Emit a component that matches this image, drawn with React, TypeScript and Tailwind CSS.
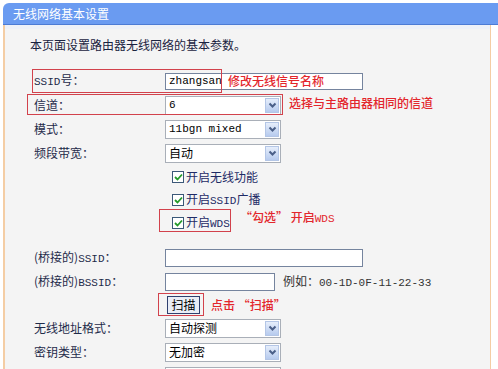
import React from "react";

const mono = "font-['Liberation_Mono','Noto_Sans_CJK_SC',monospace]";
const cn = "font-['Noto_Sans_CJK_SC',sans-serif]";

const Lat = ({ children }: { children: React.ReactNode }) => (
  <span className={`${mono} text-[11px]`}>{children}</span>
);

const Arrow = () => (
  <span className="ml-auto mr-[1px] flex h-[15px] w-[14px] items-center justify-center border border-[#b4c6e6] bg-gradient-to-b from-[#e6eefb] to-[#b7cbee]">
    <svg width="9" height="7" viewBox="0 0 9 7">
      <path d="M1.5 1.5 L4.5 4.5 L7.5 1.5" fill="none" stroke="#4a5f88" strokeWidth="2" />
    </svg>
  </span>
);

const Select = ({ value, latin }: { value: string; latin?: boolean }) => (
  <div className="flex h-[19px] w-[116px] items-center border border-[#a9afb8] bg-white pl-[3px]">
    <span className={latin ? `${mono} text-[11px] text-black` : `${cn} text-[12px] text-black`}>{value}</span>
    <Arrow />
  </div>
);

const Check = () => (
  <span className="flex h-[12px] w-[12px] items-center justify-center border border-[#3b5878] bg-white">
    <svg width="9" height="8" viewBox="0 0 9 8">
      <path d="M1 4 L3.5 6.5 L8 1.5" fill="none" stroke="#249a2a" strokeWidth="1.8" />
    </svg>
  </span>
);

const Row = ({
  label,
  children,
  className = "",
}: {
  label?: React.ReactNode;
  children?: React.ReactNode;
  className?: string;
}) => (
  <div className={`relative flex h-6 items-center pl-[29px] ${className}`}>
    <div className={`w-[131px] ${cn} text-[12px] text-[#1f2b4a]`}>{label}</div>
    {children}
  </div>
);

const CheckRow = ({ children, className = "" }: { children: React.ReactNode; className?: string }) => (
  <div className={`relative flex h-[23px] items-center gap-[2px] pl-[167px] ${cn} text-[12px] text-[#1f2b66] ${className}`}>
    <Check />
    <span>{children}</span>
  </div>
);

const Note = ({ children, className }: { children: React.ReactNode; className: string }) => (
  <span className={`absolute ${cn} text-[12px] font-medium text-[#e3262c] ${className}`}>{children}</span>
);

export default function App() {
  return (
    <div className="h-[369px] w-[498px] overflow-hidden bg-white pt-[3px]">
      <div className={`ml-[3px] flex h-[22px] items-center rounded-tl-[6px] border-b border-[#4c7bd4] bg-[#6a9bf1] pl-[10px] ${cn} text-[12px] text-white`}>
        无线网络基本设置
      </div>
      <div className="ml-[3px] h-[400px] w-[488px] border-r border-l-2 border-[#f4cda4] bg-[#f4f4f4]">
        <div className="h-[4px] bg-[#eef1f8]" />
        <div className={`mt-[4px] flex h-6 items-center pl-[25px] ${cn} text-[12px] text-[#1a2340]`}>
          本页面设置路由器无线网络的基本参数。
        </div>

        <Row
          className="mt-[12px]"
          label={
            <>
              <Lat>SSID</Lat>号：
            </>
          }
        >
          <div className="flex h-[17px] w-[198px] items-center border border-[#75849e] bg-white pl-[3px]">
            <span className={`${mono} text-[11px] text-black`}>zhangsan</span>
          </div>
          <span className="pointer-events-none absolute left-[27px] top-0 h-[24px] w-[190px] border-[1.5px] border-[#d2424c]" />
          <Note className="left-[223px] top-[3px]">修改无线信号名称</Note>
        </Row>

        <Row label="信道：">
          <Select value="6" latin />
          <span className="pointer-events-none absolute left-[22px] top-[1px] h-[21px] w-[256px] border-[1.5px] border-[#d2424c]" />
          <Note className="left-[284px] top-[1px]">选择与主路由器相同的信道</Note>
        </Row>

        <Row label="模式：">
          <Select value="11bgn mixed" latin />
        </Row>
        <Row label="频段带宽：">
          <Select value="自动" />
        </Row>

        <CheckRow>开启无线功能</CheckRow>
        <CheckRow>
          开启<Lat>SSID</Lat>广播
        </CheckRow>
        <CheckRow>
          开启<Lat>WDS</Lat>
          <span className="pointer-events-none absolute left-[154px] top-[-2px] h-[23px] w-[72px] border-[1.5px] border-[#d2424c]" />
          <Note className="left-[235px] top-[-3px]">
            “勾选” 开启<span className={`${mono} text-[11px]`}>WDS</span>
          </Note>
        </CheckRow>

        <Row className="mt-[12px]" label={<>(桥接的)<Lat>SSID</Lat>：</>}>
          <div className="h-[18px] w-[198px] border border-[#75849e] bg-white" />
        </Row>
        <Row label={<>(桥接的)<Lat>BSSID</Lat>：</>}>
          <div className="h-[18px] w-[110px] border border-[#75849e] bg-white" />
          <span className={`ml-[8px] ${cn} text-[12px] text-[#333]`}>
            例如：<Lat>00-1D-0F-11-22-33</Lat>
          </span>
        </Row>

        <div className="relative flex h-[22px] items-center pl-[162px]">
          <button className={`flex h-[18px] w-[33px] items-center justify-center border border-[#2f3f6e] bg-[#e9edf6] ${cn} text-[12px] text-black`}>
            扫描
          </button>
          <span className="pointer-events-none absolute left-[153px] top-[-1px] h-[23px] w-[46px] border-[1.5px] border-[#d2424c]" />
          <Note className="left-[206px] top-[2px]">点击 “扫描”</Note>
        </div>

        <Row label="无线地址格式：">
          <Select value="自动探测" />
        </Row>
        <Row label="密钥类型：">
          <Select value="无加密" />
        </Row>
        <Row label="">
          <Select value="" />
        </Row>
      </div>
    </div>
  );
}
